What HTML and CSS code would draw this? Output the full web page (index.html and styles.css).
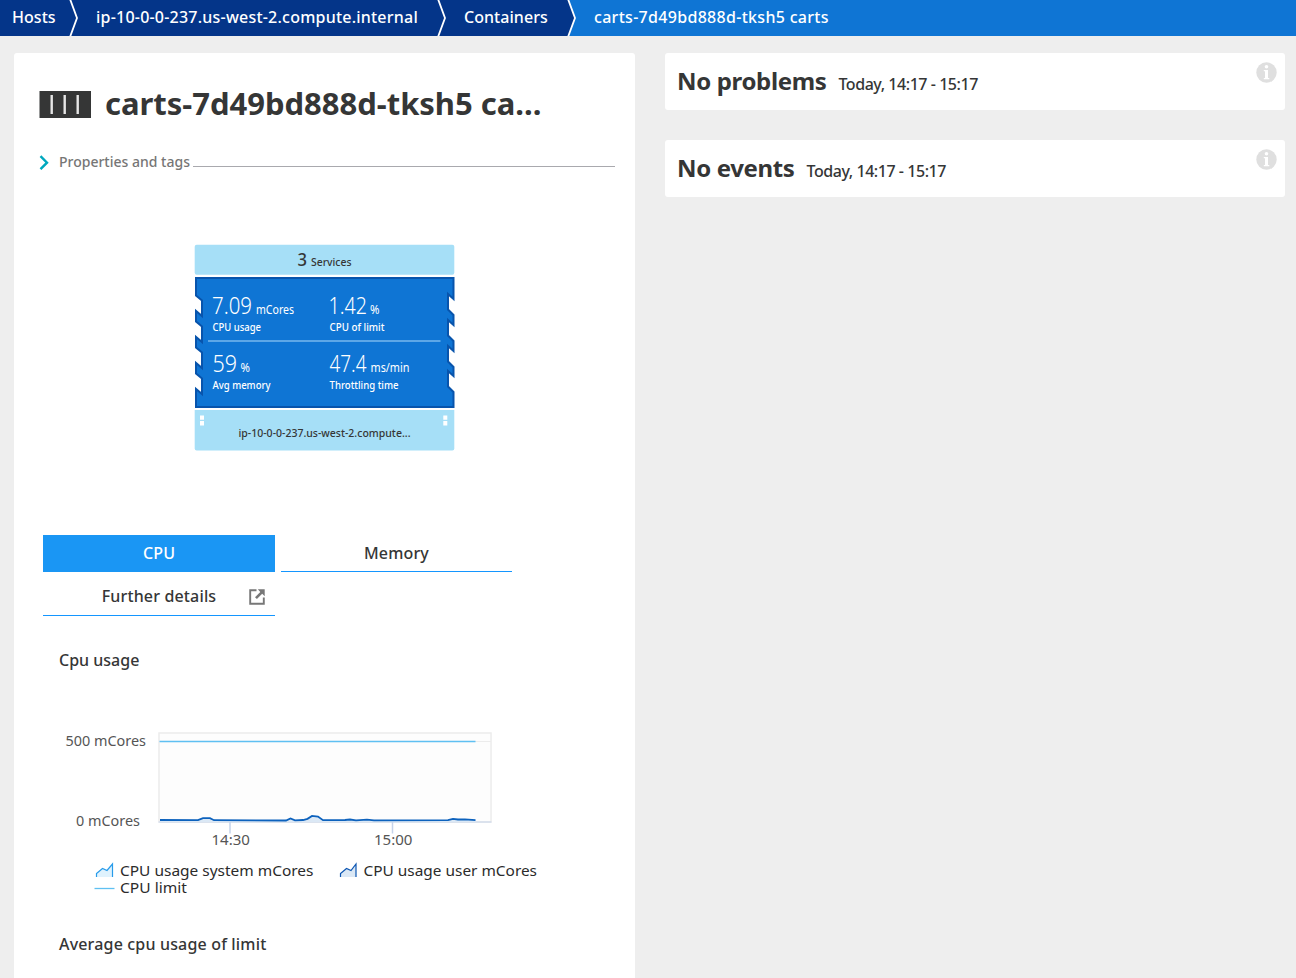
FILE: index.html
```html
<!DOCTYPE html>
<html lang="en">
<head>
<meta charset="utf-8">
<title>carts-7d49bd888d-tksh5 carts</title>
<link rel="stylesheet" href="styles.css">
</head>
<body>
<nav class="crumbs">
  <a class="crumb crumb-hosts"><span>Hosts</span></a>
  <svg class="crumb-sep" width="10" height="36" viewBox="0 0 10 36"><path d="M1 -1L8 18L1 37" fill="none" stroke="#fff" stroke-width="1.8"/></svg>
  <a class="crumb crumb-node"><span>ip-10-0-0-237.us-west-2.compute.internal</span></a>
  <svg class="crumb-sep" width="10" height="36" viewBox="0 0 10 36"><path d="M1 -1L8 18L1 37" fill="none" stroke="#fff" stroke-width="1.8"/></svg>
  <a class="crumb crumb-containers"><span>Containers</span></a>
  <svg class="crumb-sep" width="10" height="36" viewBox="0 0 10 36"><path d="M1 -1L8 18L1 37H10V-1Z" fill="#0f75d4"/><path d="M1 -1L8 18L1 37" fill="none" stroke="#fff" stroke-width="1.8"/></svg>
  <a class="crumb crumb-current"><span>carts-7d49bd888d-tksh5 carts</span></a>
</nav>
<main class="page">
  <section class="card details">
    <header class="title-row">
      <svg width="52" height="27" viewBox="0 0 52 27"><path d="M0.500 0H52V27H0.500Z" fill="#353636"/><path d="M12.700 4V23M25.700 4V23M38.700 4V23" stroke="#e6e6e6" stroke-width="2.400"/></svg>
      <h1 class="title">carts-7d49bd888d-tksh5 ca...</h1>
    </header>
    <div class="props">
      <svg width="10" height="16" viewBox="0 0 10 16"><path d="M1.500 2.200L8 8.700L1.500 15.200" fill="none" stroke="#00a8be" stroke-width="2.400"/></svg>
      <span class="props-label">Properties and tags</span>
      <span class="props-line"></span>
    </div>
    <svg class="infographic" width="262" height="208" viewBox="194 244 262 208">
      <rect x="194.700" y="244.700" width="259.600" height="30" rx="2" fill="#a6dff7"/>
      <path d="M196 278H453.500V299L448 294V309.500L453.500 315V325L448 320V335.500L453.500 341V351L448 346V361.500L453.500 367V376L448 371V386.500L453.500 392V407H196V389L202 394V378.500L196 373.500V363L202 368V352.500L196 347.500V337L202 342V326.500L196 321.500V311L202 316V300.500L196 295.500Z" fill="#0f75d4" stroke="#0854ac" stroke-width="2"/>
      <path d="M208 341H440.500" stroke="#78b9ee" stroke-width="1.500"/>
      <path d="M194.700 410H454.300V448.500Q454.300 450.500 452.300 450.500H196.700Q194.700 450.500 194.700 448.500Z" fill="#a6dff7"/>
      <path d="M200 415.500h4v4.300h-4zM200 421h4v4.500h-4zM443.300 415.500h4v4.300h-4zM443.300 421h4v4.500h-4z" fill="#fff"/>
      <g class="ig-dark">
        <text class="ig-count" x="297.500" y="266" textLength="9.500" lengthAdjust="spacingAndGlyphs">3</text>
        <text class="ig-small" x="311" y="266" textLength="40.500" lengthAdjust="spacingAndGlyphs">Services</text>
        <text class="ig-small" x="238.500" y="437" textLength="172" lengthAdjust="spacingAndGlyphs">ip-10-0-0-237.us-west-2.compute...</text>
      </g>
      <g class="ig-light">
        <text class="ig-value" x="212" y="314" textLength="40" lengthAdjust="spacingAndGlyphs">7.09</text>
        <text class="ig-unit" x="256" y="314" textLength="38" lengthAdjust="spacingAndGlyphs">mCores</text>
        <text class="ig-label" x="212.500" y="331" textLength="48.500" lengthAdjust="spacingAndGlyphs">CPU usage</text>
        <text class="ig-value" x="328.500" y="314" textLength="38.500" lengthAdjust="spacingAndGlyphs">1.42</text>
        <text class="ig-unit" x="370" y="314" textLength="9.500" lengthAdjust="spacingAndGlyphs">%</text>
        <text class="ig-label" x="329.500" y="331" textLength="55" lengthAdjust="spacingAndGlyphs">CPU of limit</text>
        <text class="ig-value" x="212.500" y="372" textLength="24.500" lengthAdjust="spacingAndGlyphs">59</text>
        <text class="ig-unit" x="240.500" y="372" textLength="9.500" lengthAdjust="spacingAndGlyphs">%</text>
        <text class="ig-label" x="212.500" y="389" textLength="58" lengthAdjust="spacingAndGlyphs">Avg memory</text>
        <text class="ig-value" x="329.500" y="372" textLength="37" lengthAdjust="spacingAndGlyphs">47.4</text>
        <text class="ig-unit" x="370.500" y="372" textLength="39" lengthAdjust="spacingAndGlyphs">ms/min</text>
        <text class="ig-label" x="329.500" y="389" textLength="69" lengthAdjust="spacingAndGlyphs">Throttling time</text>
      </g>
    </svg>
    <div class="tabs">
      <a class="tab tab-active"><span>CPU</span></a>
      <a class="tab"><span>Memory</span></a>
      <a class="tab tab-link"><span>Further details</span>
        <svg class="tab-icon" width="16" height="16" viewBox="0 0 16 16"><path d="M7.500 1.200H1.200V14.800H14.800V8.500" fill="none" stroke="#777" stroke-width="1.900"/><path d="M8.800 0.300H15.700V7.200L13.200 4.800L7.900 10.100L6 8.200L11.300 2.900Z" fill="#777"/></svg>
      </a>
    </div>
    <h2 class="sub sub-usage"><span>Cpu usage</span></h2>
    <svg class="chart" width="480" height="170" viewBox="60 728 480 170">
      <rect x="159" y="733" width="332" height="89" fill="#fdfdfd" stroke="#ececec" stroke-width="1.500"/>
      <path d="M475 741.500H491" stroke="#ececec"/>
      <path d="M159.500 741.500H475.500" stroke="#5fc0f2" stroke-width="1.300"/>
      <path d="M158.500 822H491.500" stroke="#c5d3ea" stroke-width="1.200"/>
      <path d="M230 822V833.500M392.500 822V833.500" stroke="#c5d3ea" stroke-width="1.500"/>
      <path d="M160 820L198 820.200L203 818.100L210 818.100L214 820.200L286 820.500L290.500 818.400L295 820.300L303 820L307.500 818.800L312 815.900L318 816.500L323 820.200L345 820L350 819.500L356 820.300L367 819.700L374 820.300L448 820.200L453 818.900L458 819.500L465 819.300L475.500 820.200V822H160Z" fill="#dbe8f5"/>
      <path d="M160 820L198 820.200L203 818.100L210 818.100L214 820.200L286 820.500L290.500 818.400L295 820.300L303 820L307.500 818.800L312 815.900L318 816.500L323 820.200L345 820L350 819.500L356 820.300L367 819.700L374 820.300L448 820.200L453 818.900L458 819.500L465 819.300L475.500 820.200" fill="none" stroke="#0d62bd" stroke-width="1.800"/>
      <g class="axis">
        <text x="65.500" y="746" textLength="80.500" lengthAdjust="spacingAndGlyphs">500 mCores</text>
        <text x="76" y="826" textLength="64" lengthAdjust="spacingAndGlyphs">0 mCores</text>
        <text x="211.500" y="845" textLength="38.500" lengthAdjust="spacingAndGlyphs">14:30</text>
        <text x="374" y="845" textLength="38.500" lengthAdjust="spacingAndGlyphs">15:00</text>
      </g>
      <path d="M96.500 877V873.500L102.500 868.500L107 870.500L112.500 864V877Z" fill="#dff2fd"/>
      <path d="M96.500 877V873.500L102.500 868.500L107 870.500L112.500 864V877" fill="none" stroke="#279bea" stroke-width="1.200"/>
      <path d="M340.500 877V873.500L346.500 868.500L351 870.500L356 864V877Z" fill="#dbe8f5"/>
      <path d="M340.500 877V873.500L346.500 868.500L351 870.500L356 864V877" fill="none" stroke="#0d56b2" stroke-width="1.200"/>
      <path d="M94.500 888.500H114.500" stroke="#5fc0f2" stroke-width="1.300"/>
      <g class="legend">
        <text x="120" y="876" textLength="193.500" lengthAdjust="spacingAndGlyphs">CPU usage system mCores</text>
        <text x="363.500" y="876" textLength="173.500" lengthAdjust="spacingAndGlyphs">CPU usage user mCores</text>
        <text x="120" y="893" textLength="67" lengthAdjust="spacingAndGlyphs">CPU limit</text>
      </g>
    </svg>
    <h2 class="sub sub-average"><span>Average cpu usage of limit</span></h2>
  </section>
  <aside class="side">
    <section class="card notice">
      <h2 class="notice-title">No problems</h2><span class="notice-time">Today, 14:17 - 15:17</span>
      <svg class="info" width="21" height="21" viewBox="0 0 21 21"><circle cx="10.500" cy="10.500" r="10.200" fill="#dfdfdf"/><circle cx="10.500" cy="4.800" r="1.800" fill="#fff"/><path d="M7.800 8H12V16H13.300V17.300H7.800V16H9V9.300H7.800Z" fill="#fff"/></svg>
    </section>
    <section class="card notice">
      <h2 class="notice-title">No events</h2><span class="notice-time">Today, 14:17 - 15:17</span>
      <svg class="info" width="21" height="21" viewBox="0 0 21 21"><circle cx="10.500" cy="10.500" r="10.200" fill="#dfdfdf"/><circle cx="10.500" cy="4.800" r="1.800" fill="#fff"/><path d="M7.800 8H12V16H13.300V17.300H7.800V16H9V9.300H7.800Z" fill="#fff"/></svg>
    </section>
  </aside>
</main>
</body>
</html>
```
FILE: styles.css
```css
* { box-sizing: border-box; }
body {
  margin: 0;
  height: 978px;
  overflow: hidden;
  background: #eee;
  color: #353636;
  font-family: "Noto Sans", "Open Sans", sans-serif;
}
h1, h2 { margin: 0; }
svg { display: block; flex: none; }

.crumbs {
  display: flex;
  height: 36px;
  background: #043589;
  color: #fff;
  font-size: 16px;
  font-weight: 500;
  line-height: 34px;
  white-space: nowrap;
}
.crumb { flex: none; }
.crumb-hosts { width: 69px; padding-left: 12px; letter-spacing: 0.05px; }
.crumb-node { width: 358px; padding-left: 17px; letter-spacing: 0.22px; }
.crumb-containers { width: 120px; padding-left: 17px; letter-spacing: 0.05px; }
.crumb-current { flex: 1; padding-left: 17px; background: #0f75d4; letter-spacing: 0.3px; }

.page {
  display: grid;
  grid-template-columns: 621px 620px;
  gap: 30px;
  padding: 17px 0 0 14px;
}
.card { background: #fff; border-radius: 3px; }
.details { height: 960px; padding: 0 20px 0 25px; }

.title-row { display: flex; align-items: center; gap: 14px; height: 50px; margin-top: 26px; }
.title { font-size: 31px; font-weight: 700; line-height: 50px; margin-top: -3px; white-space: nowrap; letter-spacing: -0.02px; }

.props { display: flex; align-items: center; height: 24px; margin-top: 21px; }
.props-label { margin-left: 10px; width: 131px; color: #767676; font-size: 14px; font-weight: 500; line-height: 24px; white-space: nowrap; }
.props-line { flex: 1; height: 1px; margin: 8px 0 0 3px; background: #a9a9ae; }

.infographic { margin: 70px 0 0 155px; }

.tabs {
  display: grid;
  grid-template-columns: 232px 231px;
  column-gap: 6px;
  row-gap: 7px;
  margin: 83px 0 0 4px;
  font-size: 16px;
  font-weight: 500;
  letter-spacing: 0.15px;
}
.tab {
  display: grid;
  grid-template-columns: 36px 1fr 36px;
  align-items: center;
  justify-items: center;
  height: 37px;
  border-bottom: 1px solid #1496ff;
}
.tab span { grid-column: 2; white-space: nowrap; }
.tab-active { background: #1a96f4; border-color: #1a96f4; color: #fff; }
.tab-link { padding-bottom: 2px; }
.tab-icon { grid-column: 3; margin-top: 1px; }

.sub { padding-left: 20px; font-size: 16px; font-weight: 500; line-height: 24px; white-space: nowrap; }
.sub-usage { margin-top: 32px; }
.chart { margin: 56px 0 0 21px; }
.sub-average { margin-top: 34px; letter-spacing: 0.17px; }

.side { display: flex; flex-direction: column; gap: 30px; }
.notice { display: flex; align-items: baseline; height: 57px; padding: 0 8px 0 12px; white-space: nowrap; }
.notice-title { font-size: 24px; font-weight: 700; line-height: 56px; letter-spacing: -0.35px; }
.notice-time { margin-left: 12px; font-size: 16px; font-weight: 500; line-height: 24px; letter-spacing: -0.45px; }
.info { align-self: flex-start; margin: 9px 0 0 auto; }

.infographic, .chart { font-weight: 500; }
.ig-dark { fill: #353636; }
.ig-light { fill: #fff; }
.ig-count { font-size: 18px; }
.ig-small { font-size: 10.500px; }
.ig-value { font-size: 23px; font-weight: 300; }
.ig-unit { font-size: 12px; font-weight: 400; }
.ig-label { font-size: 10px; }
.axis { fill: #555; font-size: 14px; font-weight: 400; }
.legend { fill: #2b2b2b; font-size: 15px; font-weight: 400; }
```
